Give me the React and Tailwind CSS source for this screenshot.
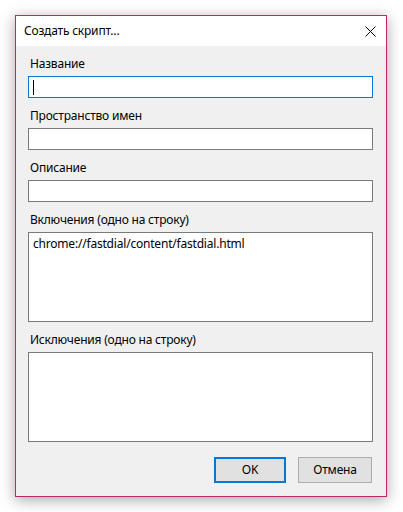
export default function App() {
  const font = { fontFamily: '"Noto Sans", "Open Sans", sans-serif' };
  return (
    <div className="w-[403px] h-[512px] bg-white p-[15px]" style={font}>
      <div className="w-[372px] h-[482px] border border-[#c4246a] bg-[#f0f0f0] flex flex-col shadow-[0_3px_14px_rgba(0,0,0,0.35)] tracking-[-0.2px]">
        <div className="h-[30px] bg-white flex items-center justify-between pl-[8px] pr-[8px]">
          <span className="text-[12px] text-black leading-[16px]">Создать скрипт...</span>
          <svg width="11" height="11" viewBox="0 0 11 11" className="mr-[2px]">
            <path d="M0.5 0.5 L10.5 10.5 M10.5 0.5 L0.5 10.5" stroke="#000" strokeWidth="1" />
          </svg>
        </div>
        <div className="flex flex-col pl-[12px] pr-[13px] pt-[10px] text-[12px] leading-[16px] text-black">
          <div className="pl-[2px]">Название</div>
          <div className="mt-[4px] h-[22px] bg-white border border-[#0078d7] flex items-center pl-[4px]">
            <span className="w-px h-[15px] bg-black"></span>
          </div>
          <div className="pl-[2px] mt-[10px]">Пространство имен</div>
          <div className="mt-[4px] h-[22px] bg-white border border-[#7a7a7a]"></div>
          <div className="pl-[2px] mt-[10px]">Описание</div>
          <div className="mt-[4px] h-[22px] bg-white border border-[#7a7a7a]"></div>
          <div className="pl-[2px] mt-[10px]">Включения (одно на строку)</div>
          <div className="mt-[4px] h-[90px] bg-white border border-[#7a7a7a] pl-[4px] pt-[3px]">chrome://fastdial/content/fastdial.html</div>
          <div className="pl-[2px] mt-[10px]">Исключения (одно на строку)</div>
          <div className="mt-[4px] h-[90px] bg-white border border-[#7a7a7a]"></div>
          <div className="flex justify-end gap-[12px] mt-[15px] pr-[1px]">
            <div className="w-[72px] h-[26px] bg-[#e1e1e1] border-2 border-[#0078d7] flex items-center justify-center">OK</div>
            <div className="w-[74px] h-[26px] bg-[#e1e1e1] border border-[#adadad] flex items-center justify-center">Отмена</div>
          </div>
        </div>
      </div>
    </div>
  );
}
